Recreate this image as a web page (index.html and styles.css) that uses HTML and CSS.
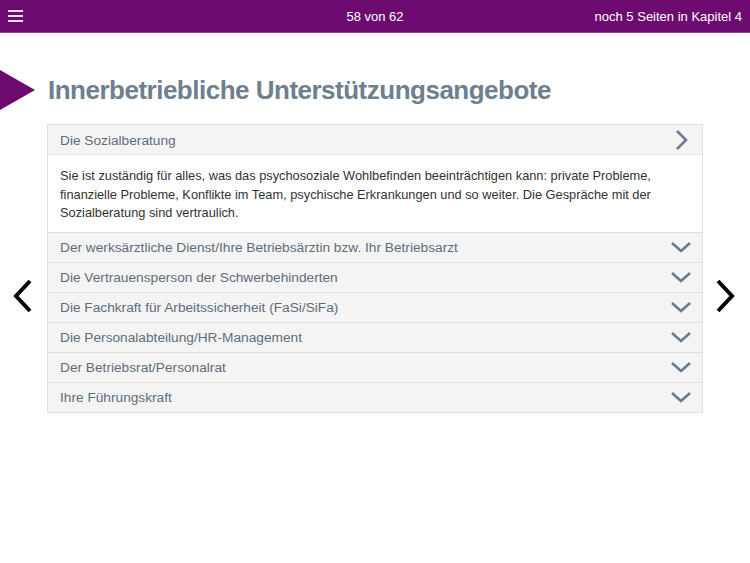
FILE: index.html
```html
<!DOCTYPE html>
<html lang="de">
<head>
<meta charset="utf-8">
<link rel="stylesheet" href="styles.css">
</head>
<body>
<header class="topbar">
  <div class="menu"><span></span><span></span><span></span></div>
  <div class="pages">58 von 62</div>
  <div class="remain">noch 5 Seiten in Kapitel 4</div>
</header>
<main class="page">
  <div class="title-row">
    <div class="marker"></div>
    <h1>Innerbetriebliche Unterstützungsangebote</h1>
  </div>
  <div class="content">
    <button class="nav nav-left" aria-label="zurück">
      <svg width="24" height="36" viewBox="0 0 24 36"><path d="M18 2 L4 17 L18 32" fill="none" stroke="#000" stroke-width="4"/></svg>
    </button>
    <div class="accordion">
      <div class="item open">
        <div class="head"><span>Die Sozialberatung</span>
          <svg class="chev" width="16" height="22" viewBox="0 0 16 22"><path d="M3 2 L12 11 L3 20" fill="none" stroke="#6a7d8e" stroke-width="2.6"/></svg>
        </div>
        <div class="body">Sie ist zuständig für alles, was das psychosoziale Wohlbefinden beeinträchtigen kann: private Probleme, finanzielle Probleme, Konflikte im Team, psychische Erkrankungen und so weiter. Die Gespräche mit der Sozialberatung sind vertraulich.</div>
      </div>
      <div class="item"><div class="head"><span>Der werksärztliche Dienst/Ihre Betriebsärztin bzw. Ihr Betriebsarzt</span><svg class="chev down" width="22" height="14" viewBox="0 0 22 14"><path d="M2 3 L11 11 L20 3" fill="none" stroke="#6a7d8e" stroke-width="2.6"/></svg></div></div>
      <div class="item"><div class="head"><span>Die Vertrauensperson der Schwerbehinderten</span><svg class="chev down" width="22" height="14" viewBox="0 0 22 14"><path d="M2 3 L11 11 L20 3" fill="none" stroke="#6a7d8e" stroke-width="2.6"/></svg></div></div>
      <div class="item"><div class="head"><span>Die Fachkraft für Arbeitssicherheit (FaSi/SiFa)</span><svg class="chev down" width="22" height="14" viewBox="0 0 22 14"><path d="M2 3 L11 11 L20 3" fill="none" stroke="#6a7d8e" stroke-width="2.6"/></svg></div></div>
      <div class="item"><div class="head"><span>Die Personalabteilung/HR-Management</span><svg class="chev down" width="22" height="14" viewBox="0 0 22 14"><path d="M2 3 L11 11 L20 3" fill="none" stroke="#6a7d8e" stroke-width="2.6"/></svg></div></div>
      <div class="item"><div class="head"><span>Der Betriebsrat/Personalrat</span><svg class="chev down" width="22" height="14" viewBox="0 0 22 14"><path d="M2 3 L11 11 L20 3" fill="none" stroke="#6a7d8e" stroke-width="2.6"/></svg></div></div>
      <div class="item"><div class="head"><span>Ihre Führungskraft</span><svg class="chev down" width="22" height="14" viewBox="0 0 22 14"><path d="M2 3 L11 11 L20 3" fill="none" stroke="#6a7d8e" stroke-width="2.6"/></svg></div></div>
    </div>
    <button class="nav nav-right" aria-label="weiter">
      <svg width="24" height="36" viewBox="0 0 24 36"><path d="M4 2 L18 17 L4 32" fill="none" stroke="#000" stroke-width="4"/></svg>
    </button>
  </div>
</main>
</body>
</html>
```
FILE: styles.css
```css
* { box-sizing: border-box; }
html, body { margin: 0; padding: 0; background: #fff; }
body {
  font-family: "Liberation Sans", Arial, Helvetica, sans-serif;
  width: 750px;
  height: 563px;
  overflow: hidden;
}
.topbar {
  height: 33px;
  background: #6c0a70;
  color: #fff;
  display: flex;
  align-items: center;
  position: relative;
  font-size: 13px;
  border-bottom: 1px solid #8a4a8c;
}
.menu {
  width: 15px;
  margin-left: 8px;
  display: flex;
  flex-direction: column;
  gap: 3px;
}
.menu span {
  display: block;
  height: 2px;
  background: #f2e4f2;
}
.pages {
  position: absolute;
  left: 0;
  right: 0;
  text-align: center;
  top: 9px;
}
.remain {
  margin-left: auto;
  margin-right: 8px;
  position: relative;
}
.title-row {
  display: flex;
  align-items: center;
  margin-top: 37px;
  height: 40px;
}
.marker {
  width: 0;
  height: 0;
  border-top: 20px solid transparent;
  border-bottom: 20px solid transparent;
  border-left: 35px solid #6c0a70;
}
h1 {
  margin: 1px 0 0 13px;
  font-size: 26px;
  font-weight: bold;
  color: #6e7f8f;
  letter-spacing: -0.5px;
}
.content {
  display: flex;
  align-items: flex-start;
  margin-top: 14px;
}
.nav {
  background: none;
  border: 0;
  padding: 0;
  width: 47px;
  display: flex;
  margin-top: 155px;
}
.nav-left { justify-content: flex-start; padding-left: 12px; }
.nav-right { justify-content: flex-start; padding-left: 11px; }
.accordion {
  width: 656px;
  border: 1px solid #e0e0e0;
  border-bottom: 0;
}
.item { border-bottom: 1px solid #e0e0e0; }
.head {
  height: 29px;
  background: #f4f4f4;
  display: flex;
  align-items: center;
  justify-content: space-between;
  padding: 0 10px 0 12px;
  font-size: 13.7px;
  color: #5e6d7b;
}
.head span { padding-top: 1px; }
.chev { display: block; }
.item.open .chev { margin-right: 2px; }
.body {
  border-top: 1px solid #e6e6e6;
  padding: 12px 12px 9px 12px;
  font-size: 12.8px;
  line-height: 18.5px;
  color: #333;
  background: #fff;
}
```
